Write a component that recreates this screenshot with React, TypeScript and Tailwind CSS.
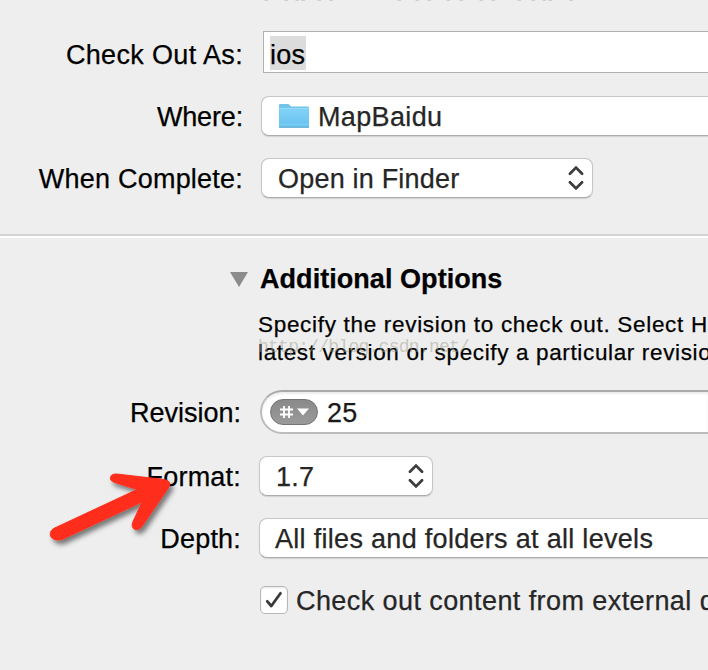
import type { ReactNode } from 'react'

function Label({ children, className = '' }: { children: ReactNode; className?: string }) {
  return <span className={`shrink-0 text-right leading-10 text-black ${className}`}>{children}</span>
}

function Stepper() {
  return (
    <svg width="18" height="26" viewBox="0 0 18 26" fill="none" stroke="#3c3c3c" strokeWidth="2.7" strokeLinecap="round" strokeLinejoin="miter">
      <path d="M2.9 8.8 9 2.6l6.1 6.2" />
      <path d="M2.9 17.2 9 23.4l6.1-6.2" />
    </svg>
  )
}

function Popup({ children, className = '' }: { children: ReactNode; className?: string }) {
  return (
    <div className={`flex h-10 items-center border border-[#c6c6c6] border-b-[#acacac] bg-white text-[#262626] shadow-[0_1px_1px_rgba(0,0,0,0.12)] ${className}`}>
      {children}
    </div>
  )
}

function FolderIcon() {
  return (
    <svg width="32" height="28" viewBox="0 0 32 28">
      <defs>
        <linearGradient id="folder" x1="0" y1="0" x2="0" y2="1">
          <stop offset="0" stopColor="#82d2f8" />
          <stop offset="1" stopColor="#67c3f0" />
        </linearGradient>
      </defs>
      <path d="M1 25V3.2Q1 2 2.2 2h7.6q.8 0 1.3.6L13 4.5h17q1 0 1 1V25z" fill="#72c3ea" />
      <path d="M1.3 6.8h29.4v18H1.3z" fill="url(#folder)" />
      <path d="M1 6.4h30" stroke="#9adffb" />
      <path d="M1 22.6h30" stroke="#80cef3" />
      <path d="M1 25.3h30" stroke="#54a6cf" strokeWidth="1" />
    </svg>
  )
}

function Arrow() {
  return (
    <svg className="absolute left-[30px] top-[460px]" width="170" height="100" viewBox="30 460 170 100">
      <defs>
        <filter id="drop" x="-20%" y="-20%" width="150%" height="160%">
          <feDropShadow dx="3" dy="4" stdDeviation="2.5" floodColor="#000" floodOpacity="0.5" />
        </filter>
      </defs>
      <path
        d="M53.5 528.5L137 489.5L115 482.5Q109.5 481 110.5 477.5Q111 473.5 117 474L164 479.5Q172 481 169 487L142 526.5Q139 530.5 135 529.5Q131 527.5 132.5 522.5L142 502L62 539.5Q55 541.5 51 537Q48.5 532 53.5 528.5Z"
        fill="#ff2e1c"
        stroke="#ff2e1c"
        strokeWidth="0.9"
        filter="url(#drop)"
      />
    </svg>
  )
}

// lower edge of the line of text scrolled out above the form
const clippedMarks = [266, 286, 297, 303, 319, 331, 399, 417, 429, 448, 461, 481, 493, 519, 533, 544, 550, 571]

export default function App() {
  return (
    <main className="relative h-[670px] w-[708px] overflow-hidden bg-[#eeeeee] font-['Liberation_Sans',Arial,sans-serif] text-[27px] tracking-[0.22px] whitespace-nowrap [-webkit-text-stroke:0.25px]">
      <section className="flex h-[234px] flex-col">
        <svg className="h-[31px] w-full shrink-0" viewBox="0 0 708 31">
          {clippedMarks.map((x) => <rect key={x} x={x - 1.5} width="3.5" height="1" fill="#cfcfcf" />)}
        </svg>
        <div className="flex h-[65px] items-start">
          <Label className="w-[243px] pt-1 tracking-[0.35px]">Check Out As:</Label>
          <div className="ml-5 flex h-[42px] flex-1 items-start border border-r-0 border-[#b0b0b0] bg-white pt-1 pl-1.5">
            <span className="h-[34px] w-9 bg-[#dcdcdc] leading-[39px] text-black">ios</span>
          </div>
        </div>
        <div className="flex h-[62px] items-start">
          <Label className="w-[243px] pt-px tracking-[-0.15px]">Where:</Label>
          <Popup className="ml-[18px] flex-1 rounded-l-lg border-r-0 pl-4">
            <FolderIcon />
            <span className="ml-2 pt-0.5 tracking-[0.35px]">MapBaidu</span>
          </Popup>
        </div>
        <div className="flex items-start">
          <Label className="w-[243px] pt-px">When Complete:</Label>
          <Popup className="ml-[18px] w-[332px] justify-between rounded-lg pr-[7px] pl-4">
            <span className="pt-0.5 tracking-[0.2px]">Open in Finder</span>
            <Stepper />
          </Popup>
        </div>
      </section>

      <section className="border-t-2 border-[#d4d4d4]">
        <div className="h-0.5 bg-white" />
        <div className="flex h-[72px] items-start pt-[21px] pl-[230px]">
          <svg className="mt-[13px]" width="18" height="15" viewBox="0 0 18 15">
            <path d="M0 0h18L9 15z" fill="#8c8c8c" />
          </svg>
          <h2 className="ml-3 leading-10 font-bold tracking-[0.05px] text-black">Additional Options</h2>
        </div>
        <div className="relative h-20 pt-px pl-[258px] text-[22.5px] leading-7 text-black">
          <p className="tracking-[0.69px]">Specify the revision to check out. Select HEAD</p>
          <p className="tracking-[0.64px]">latest version or specify a particular revision</p>
          <span className="absolute top-[23px] left-[258px] font-['Liberation_Mono',monospace] text-[18px] tracking-[-0.75px] text-[#a0a090]/50 [-webkit-text-stroke:0]">
            http://blog.csdn.net/
          </span>
        </div>
        <div className="flex h-[66px] items-start">
          <Label className="w-[241px] pt-[3px] tracking-[0px]">Revision:</Label>
          <div className="ml-[19px] flex h-11 flex-1 items-center rounded-l-full border-2 border-r-0 border-[#bcbcbc] border-t-[#a9a9a9] bg-white pl-2 shadow-[inset_0_2px_2px_rgba(0,0,0,0.08)]">
            <span className="flex h-[26px] w-12 items-center rounded-full border border-[#747474] bg-linear-to-b from-[#8a8a8a] to-[#9a9a9a] pl-[9px]">
              <svg width="32" height="14" viewBox="0 0 32 14">
                <path d="M4 1v12M9 1v12M0 4.5h13M0 9.5h13" fill="none" stroke="#fff" strokeWidth="1.8" />
                <path d="M17 3.5h12l-6 7z" fill="#fff" />
              </svg>
            </span>
            <span className="ml-[9px] pt-0.5 text-[#1a1a1a]">25</span>
          </div>
        </div>
        <div className="flex h-[62px] items-start">
          <Label className="w-[241px] pt-px tracking-[0.2px]">Format:</Label>
          <Popup className="ml-[18px] w-[174px] justify-between rounded-lg pr-[7px] pl-4">
            <span className="pt-0.5">1.7</span>
            <Stepper />
          </Popup>
        </div>
        <div className="flex h-[68px] items-start">
          <Label className="w-[241px] pt-px tracking-[0.2px]">Depth:</Label>
          <Popup className="ml-[18px] flex-1 rounded-l-lg border-r-0 pl-[15px]">
            <span className="pt-0.5 tracking-[0.3px]">All files and folders at all levels</span>
          </Popup>
        </div>
        <div className="flex h-7 items-center pl-[260px] text-[#262626]">
          <span className="flex h-7 w-7 shrink-0 items-center justify-center rounded-[5px] border border-[#b8b8b8] bg-white shadow-[inset_0_1px_2px_rgba(0,0,0,0.1)]">
            <svg width="18" height="18" viewBox="0 0 18 18" fill="none" stroke="#3a3a3a" strokeWidth="2.8" strokeLinecap="round" strokeLinejoin="round">
              <path d="M2.3 10.3 6.3 15 15.5 2.3" />
            </svg>
          </span>
          <span className="ml-2 pt-0.5 tracking-[0.42px]">Check out content from external definitions</span>
        </div>
      </section>
      <Arrow />
    </main>
  )
}
